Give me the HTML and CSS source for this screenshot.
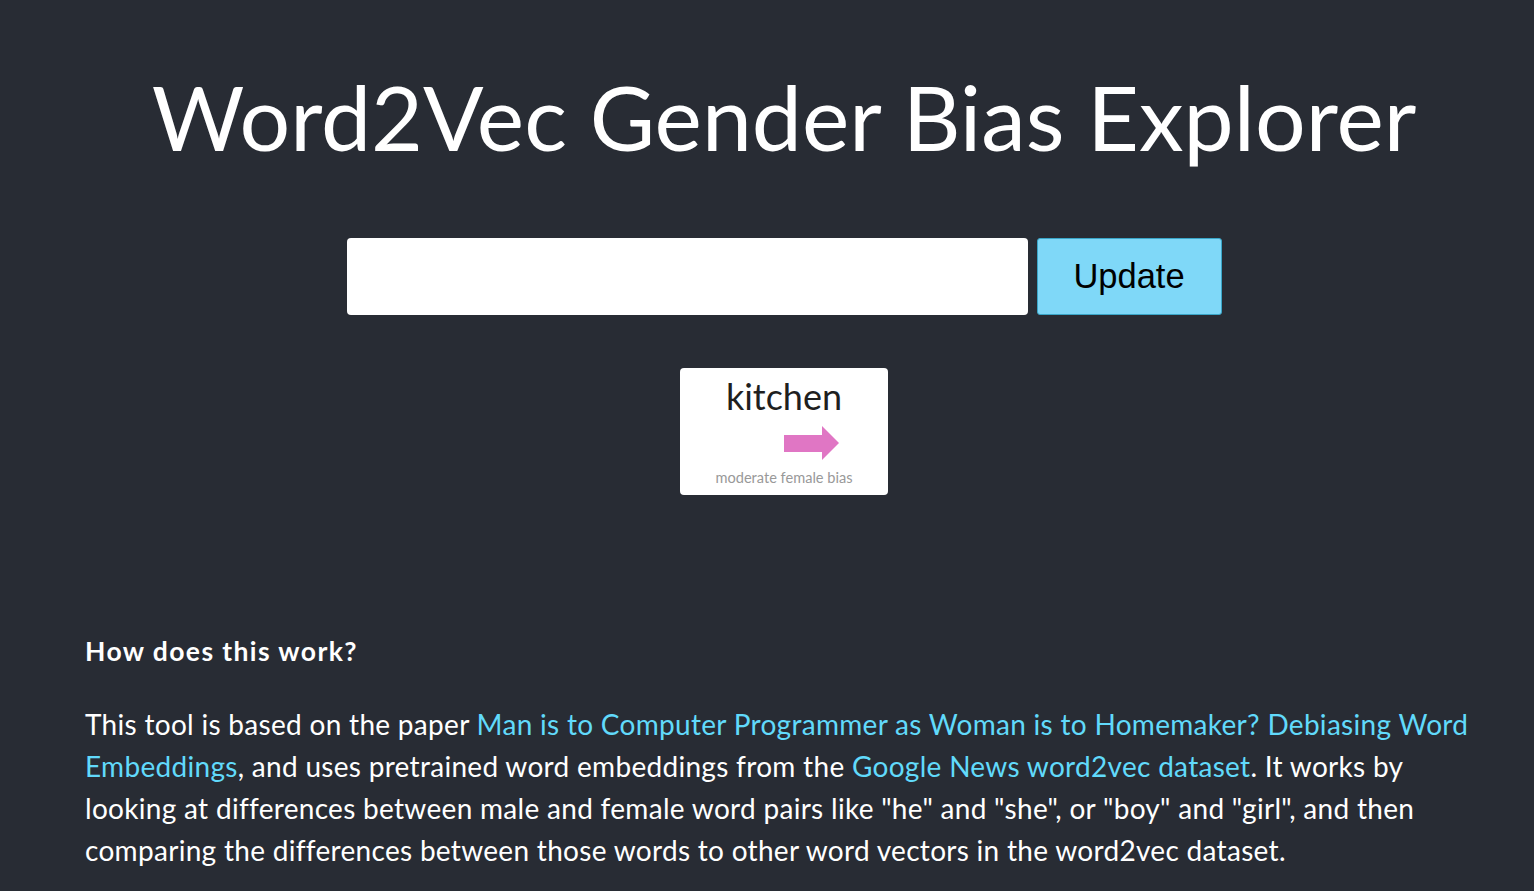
FILE: index.html
```html
<!DOCTYPE html>
<html>
<head>
<meta charset="utf-8">
<title>Word2Vec Gender Bias Explorer</title>
<link rel="stylesheet" href="styles.css">
</head>
<body>
<div class="app">
  <h1 class="title">Word2Vec Gender Bias Explorer</h1>
  <form class="search">
    <input class="search-input" type="text">
    <button class="search-btn" type="button">Update</button>
  </form>
  <div class="results">
    <div class="card">
      <div class="card-word">kitchen</div>
      <div class="card-arrow">
        <svg width="56" height="35" viewBox="0 0 56 35"><polygon points="0,9 38,9 38,0 55,17 38,34 38,26 0,26" fill="#e076c4"/></svg>
      </div>
      <div class="card-label">moderate female bias</div>
    </div>
  </div>
  <section class="about">
    <h2 class="about-title">How does this work?</h2>
    <p class="about-text">This tool is based on the paper <a href="#">Man is to Computer Programmer as Woman is to Homemaker? Debiasing Word Embeddings</a>, and uses pretrained word embeddings from the <a href="#">Google News word2vec dataset</a>. It works by looking at differences between male and female word pairs like "he" and "she", or "boy" and "girl", and then comparing the differences between those words to other word vectors in the word2vec dataset.</p>
  </section>
</div>
</body>
</html>
```
FILE: styles.css
```css
html, body {
  margin: 0;
  padding: 0;
  background: #282c34;
}
body {
  font-family: Lato, "Open Sans", sans-serif;
  color: #ffffff;
}
.app {
  display: flex;
  flex-direction: column;
  align-items: center;
  padding-left: 34px;
  box-sizing: border-box;
}
.title {
  margin: 62px 0 0;
  font-size: 89.5px;
  font-weight: 400;
  line-height: 110px;
}
.search {
  margin-top: 66px;
  display: flex;
  gap: 9px;
}
.search-input {
  width: 681px;
  height: 77px;
  box-sizing: border-box;
  border: none;
  border-radius: 4px;
  background: #fff;
  font-size: 28px;
  padding: 0 12px;
}
.search-btn {
  width: 185px;
  height: 77px;
  box-sizing: border-box;
  border: 1px solid #3aa6c8;
  border-radius: 3px;
  background: #7fd8f8;
  color: #000;
  font-family: "Liberation Sans", Arial, sans-serif;
  font-size: 34.5px;
}
.results {
  margin-top: 53px;
  display: flex;
  justify-content: center;
}
.card {
  width: 208px;
  height: 127px;
  box-sizing: border-box;
  background: #fff;
  border-radius: 4px;
  display: flex;
  flex-direction: column;
  align-items: center;
  padding-top: 6px;
}
.card-word {
  color: #1f1f1f;
  font-size: 36px;
  line-height: 44px;
}
.card-arrow {
  margin-top: 8px;
  height: 35px;
  width: 100%;
  display: flex;
  justify-content: flex-start;
  padding-left: 104px;
  box-sizing: border-box;
}
.card-label {
  margin-top: 8px;
  color: #999;
  font-size: 14.6px;
  line-height: 18px;
}
.about {
  align-self: stretch;
  padding: 0 54px 0 51px;
  margin-top: 136px;
}
.about-title {
  margin: 0;
  font-size: 26.5px;
  font-weight: 700;
  letter-spacing: 1.4px;
  line-height: 40px;
}
.about-text {
  margin: 32px 0 0;
  font-size: 28px;
  letter-spacing: 0.3px;
  line-height: 42px;
}
.about-text a {
  color: #61dafb;
  text-decoration: none;
}
```
